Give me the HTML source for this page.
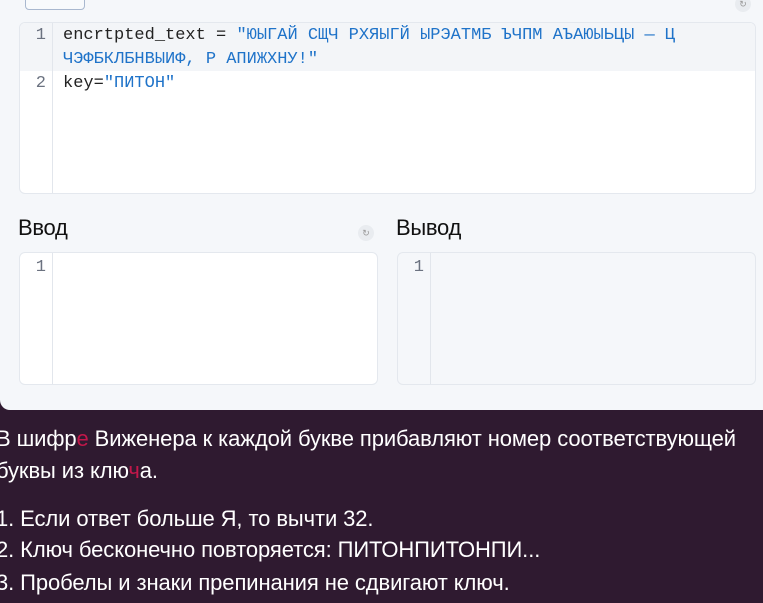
<!DOCTYPE html>
<html><head><meta charset="utf-8"><style>
*{margin:0;padding:0;box-sizing:border-box}
body{width:763px;height:603px;overflow:hidden;background:#2f1a30;font-family:"Liberation Sans",sans-serif;position:relative}
.panel{position:absolute;left:0;top:-10px;width:763px;height:420px;background:#f5f7fa;border-radius:0 0 0 10px}
.btn{position:absolute;left:25px;top:-10px;width:60px;height:20px;border:1px solid #a9b8cf;border-radius:4px;background:#f8fafc}
.ed{position:absolute;border:1px solid #e4e8ee;border-radius:6px;background:#fff;overflow:hidden}
.gut{position:absolute;left:0;top:0;bottom:0;width:33px;border-right:1px solid #e2e6ec}
.ln{position:absolute;font-family:"Liberation Mono",monospace;font-size:17px;line-height:24px;white-space:nowrap}
.num{color:#6b7280;width:26px;text-align:right}
.s{color:#1f73c9}
h3{position:absolute;font-weight:normal;font-size:22px;color:#111;letter-spacing:-0.3px}
.ic{position:absolute;width:16px;height:16px;border-radius:50%;background:#e9ecf0;color:#999;font-size:9px;text-align:center;line-height:16px}
.t{position:absolute;left:-4px;color:#fff;font-size:22px;letter-spacing:-0.1px;white-space:nowrap}
.r{color:#c2174a}
</style></head><body>
<div class="panel"></div>
<div class="btn"></div>
<div class="ic" style="left:735px;top:-4px">↻</div>
<div class="ed" style="left:19px;top:22px;width:737px;height:172px">
 <div style="position:absolute;left:0;top:0;right:0;height:48px;background:#f3f5f8"></div>
 <div class="gut"></div>
 <div class="ln num" style="left:0;top:1px">1</div>
 <div class="ln" style="left:43px;top:1px;color:#222">encrtpted_text = <span class="s">"ЮЫГАЙ СЩЧ РХЯЫГЙ ЫРЭАТМБ ЪЧПМ АЪАЮЫЬЦЫ — Ц</span></div>
 <div class="ln s" style="left:43px;top:25px">ЧЭФБКЛБНВЫИФ, Р АПИЖХНУ!"</div>
 <div class="ln num" style="left:0;top:49px">2</div>
 <div class="ln" style="left:43px;top:49px;color:#222">key=<span class="s">"ПИТОН"</span></div>
</div>
<h3 style="left:18px;top:215px">Ввод</h3>
<div class="ic" style="left:358px;top:225px">↻</div>
<h3 style="left:396px;top:215px">Вывод</h3>
<div class="ed" style="left:19px;top:252px;width:359px;height:133px"><div class="gut"></div><div class="ln num" style="left:0;top:3px">1</div></div>
<div class="ed" style="left:397px;top:252px;width:359px;height:133px;background:#f5f7fa"><div class="gut"></div><div class="ln num" style="left:0;top:3px">1</div></div>
<div class="t" style="top:426px">В шифр<span class="r">е</span> Виженера к каждой букве прибавляют номер соответствующей</div>
<div class="t" style="top:458px">буквы из клю<span class="r">ч</span>а.</div>
<div class="t" style="top:506px">1. Если ответ больше Я, то вычти 32.</div>
<div class="t" style="top:537px">2. Ключ бесконечно повторяется: ПИТОНПИТОНПИ...</div>
<div class="t" style="top:570px">3. Пробелы и знаки препинания не сдвигают ключ.</div>
</body></html>
